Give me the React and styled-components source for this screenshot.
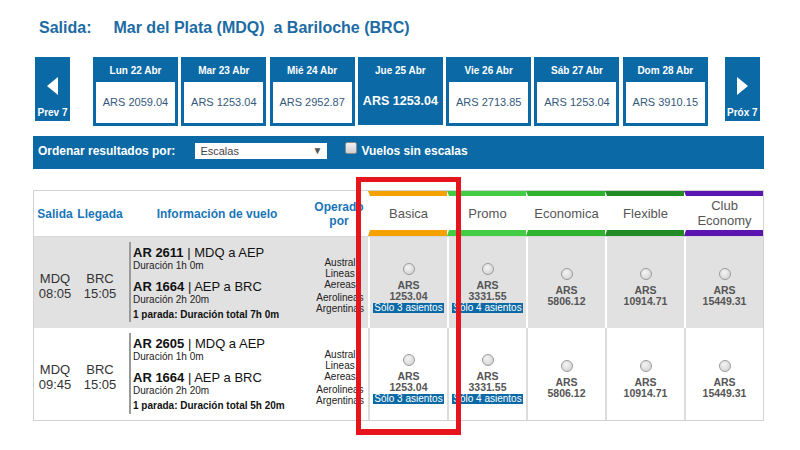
import React from "react";
import styled, { createGlobalStyle } from "styled-components";

const BLUE = "#0b6aa6";

const GlobalStyle = createGlobalStyle`
  body {
    margin: 0;
    background: #fff;
    font-family: "Liberation Sans", Arial, sans-serif;
  }
`;

const dates = [
  { label: "Lun 22 Abr", price: "ARS 2059.04" },
  { label: "Mar 23 Abr", price: "ARS 1253.04" },
  { label: "Mié 24 Abr", price: "ARS 2952.87" },
  { label: "Jue 25 Abr", price: "ARS 1253.04", selected: true },
  { label: "Vie 26 Abr", price: "ARS 2713.85" },
  { label: "Sáb 27 Abr", price: "ARS 1253.04" },
  { label: "Dom 28 Abr", price: "ARS 3910.15" },
];

const fares = [
  { name: "Basica", color: "#f5a100" },
  { name: "Promo", color: "#45cc45" },
  { name: "Economica", color: "#2db32d" },
  { name: "Flexible", color: "#238b23" },
  { name: "Club Economy", color: "#5b14b0" },
];

const flights = [
  {
    from: "MDQ",
    dep: "08:05",
    to: "BRC",
    arr: "15:05",
    legs: [
      { code: "AR 2611", route: "MDQ a AEP", dur: "Duración 1h 0m" },
      { code: "AR 1664", route: "AEP a BRC", dur: "Duración 2h 20m" },
    ],
    total: "1 parada: Duración total 7h 0m",
    shaded: true,
    prices: [
      { amount: "1253.04", seats: "Sólo 3 asientos" },
      { amount: "3331.55", seats: "Sólo 4 asientos" },
      { amount: "5806.12" },
      { amount: "10914.71" },
      { amount: "15449.31" },
    ],
  },
  {
    from: "MDQ",
    dep: "09:45",
    to: "BRC",
    arr: "15:05",
    legs: [
      { code: "AR 2605", route: "MDQ a AEP", dur: "Duración 1h 0m" },
      { code: "AR 1664", route: "AEP a BRC", dur: "Duración 2h 20m" },
    ],
    total: "1 parada: Duración total 5h 20m",
    prices: [
      { amount: "1253.04", seats: "Sólo 3 asientos" },
      { amount: "3331.55", seats: "Sólo 4 asientos" },
      { amount: "5806.12" },
      { amount: "10914.71" },
      { amount: "15449.31" },
    ],
  },
];

const App = () => {
  return (
    <Page>
      <GlobalStyle />
      <Title>
        <span>Salida:</span>
        <Route>Mar del Plata (MDQ)&nbsp; a Bariloche (BRC)</Route>
      </Title>

      <DateStrip>
        <NavButton>
          <Arrow $dir="left" />
          <NavLabel>Prev 7</NavLabel>
        </NavButton>
        <Tabs>
          {dates.map((d) =>
            d.selected ? (
              <SelectedTab key={d.label}>
                <TabLabel>{d.label}</TabLabel>
                <SelectedPrice>{d.price}</SelectedPrice>
              </SelectedTab>
            ) : (
              <Tab key={d.label}>
                <TabLabel>{d.label}</TabLabel>
                <TabPrice>{d.price}</TabPrice>
              </Tab>
            )
          )}
        </Tabs>
        <NavButton $next>
          <Arrow $dir="right" />
          <NavLabel>Próx 7</NavLabel>
        </NavButton>
      </DateStrip>

      <SortBar>
        <SortLabel>Ordenar resultados por:</SortLabel>
        <Select>
          <span>Escalas</span>
          <Caret>▼</Caret>
        </Select>
        <Check />
        <SortLabel>Vuelos sin escalas</SortLabel>
      </SortBar>

      <Table>
        <HeaderRow>
          <HeadCell>Salida</HeadCell>
          <HeadCell>Llegada</HeadCell>
          <HeadCell>Información de vuelo</HeadCell>
          <HeadCell>
            Operado
            <br />
            por
          </HeadCell>
          {fares.map((f) => (
            <FareHead key={f.name} $color={f.color}>
              <FareName>{f.name}</FareName>
            </FareHead>
          ))}
        </HeaderRow>

        {flights.map((fl, i) => (
          <Row key={i} $shaded={fl.shaded}>
            <PlaceCell>
              {fl.from}
              <br />
              {fl.dep}
            </PlaceCell>
            <PlaceCell>
              {fl.to}
              <br />
              {fl.arr}
            </PlaceCell>
            <InfoCell>
              <InfoBlock>
                {fl.legs.map((l) => (
                  <Leg key={l.code}>
                    <LegTitle>
                      <b>{l.code}</b> | {l.route}
                    </LegTitle>
                    <LegDur>{l.dur}</LegDur>
                  </Leg>
                ))}
                <Total>{fl.total}</Total>
              </InfoBlock>
            </InfoCell>
            <OperatorCell>
              <Operator>Austral Lineas Aereas</Operator>
              <Operator>Aerolineas Argentinas</Operator>
            </OperatorCell>
            {fl.prices.map((p, j) => (
              <FareCell key={j} $shaded={fl.shaded}>
                <Radio />
                <Currency>ARS</Currency>
                <Amount>{p.amount}</Amount>
                {p.seats && <Seats>{p.seats}</Seats>}
              </FareCell>
            ))}
          </Row>
        ))}
      </Table>

      <Highlight />
    </Page>
  );
};

const Page = styled.div`
  position: relative;
  width: 800px;
  height: 450px;
  padding-top: 18px;
  box-sizing: border-box;
`;

const Title = styled.div`
  margin-left: 39px;
  font-size: 16px;
  font-weight: bold;
  line-height: 19px;
  color: #1d6ba3;
`;

const Route = styled.span`
  margin-left: 22px;
`;

const DateStrip = styled.div`
  display: flex;
  align-items: flex-start;
  margin: 20px 0 0 35px;
`;

const NavButton = styled.div`
  width: 35px;
  height: 64px;
  background: ${BLUE};
  display: flex;
  flex-direction: column;
  align-items: center;
  margin-left: ${(p) => (p.$next ? "17px" : "0")};
  box-sizing: border-box;
  padding-top: 20px;
`;

const Arrow = styled.div`
  width: 0;
  height: 0;
  border-top: 9px solid transparent;
  border-bottom: 9px solid transparent;
  ${(p) =>
    p.$dir === "left"
      ? "border-right: 11px solid #fff;"
      : "border-left: 11px solid #fff;"}
`;

const NavLabel = styled.div`
  margin-top: 12px;
  font-size: 10px;
  font-weight: bold;
  color: #fff;
  white-space: nowrap;
`;

const Tabs = styled.div`
  display: flex;
  gap: 3.3px;
  margin-left: 23px;
`;

const Tab = styled.div`
  width: 85px;
  height: 69px;
  box-sizing: border-box;
  background: ${BLUE};
  padding: 0 3px 3px;
  display: flex;
  flex-direction: column;
`;

const SelectedTab = styled(Tab)`
  height: 68px;
`;

const TabLabel = styled.div`
  height: 25px;
  line-height: 27px;
  text-align: center;
  font-size: 10px;
  font-weight: bold;
  color: #fff;
`;

const TabPrice = styled.div`
  height: 41px;
  line-height: 41px;
  background: #fff;
  text-align: center;
  font-size: 11px;
  color: #34587c;
`;

const SelectedPrice = styled.div`
  line-height: 38px;
  text-align: center;
  font-size: 12.5px;
  font-weight: bold;
  color: #fff;
`;

const SortBar = styled.div`
  display: flex;
  align-items: center;
  width: 731px;
  height: 33px;
  box-sizing: border-box;
  margin: 10px 0 0 33px;
  padding: 0 0 4px 5px;
  background: ${BLUE};
`;

const SortLabel = styled.span`
  font-size: 12px;
  font-weight: bold;
  color: #fff;
`;

const Select = styled.div`
  display: flex;
  align-items: center;
  justify-content: space-between;
  width: 132px;
  height: 16px;
  box-sizing: border-box;
  margin: 0 18px 0 20px;
  padding: 0 5px 0 5px;
  background: #fff;
  font-size: 11px;
  color: #444;
`;

const Caret = styled.span`
  font-size: 10px;
  line-height: 10px;
  color: #555;
`;

const Check = styled.div`
  width: 12px;
  height: 12px;
  box-sizing: border-box;
  margin: 0 4px 6px 0;
  border: 1px solid #8a8a8a;
  border-radius: 2px;
  background: linear-gradient(#f2f2f2, #cfcfcf);
`;

const COLS = "42px 48px 186px 58px repeat(5, 79px)";

const Table = styled.div`
  margin: 21px 0 0 33px;
  width: 731px;
  border: 1px solid #d2d2d2;
  box-sizing: border-box;
`;

const HeaderRow = styled.div`
  display: grid;
  grid-template-columns: ${COLS};
  height: 45px;
  border-bottom: 1px solid #d8d8d8;
`;

const HeadCell = styled.div`
  display: flex;
  align-items: center;
  justify-content: center;
  text-align: center;
  font-size: 12px;
  font-weight: bold;
  line-height: 14px;
  color: #1a75b8;
  white-space: nowrap;
`;

const FareHead = styled.div`
  display: flex;
  border-left: 2px solid #fff;
  border-top: 5px solid ${(p) => p.$color};
  border-bottom: 6px solid ${(p) => p.$color};
`;

const FareName = styled.div`
  flex: 1;
  display: flex;
  align-items: center;
  justify-content: center;
  text-align: center;
  padding: 0 4px;
  font-size: 13px;
  line-height: 15px;
  color: #555;
  word-spacing: 60px;
`;

const Row = styled.div`
  display: grid;
  grid-template-columns: ${COLS};
  height: 91px;
  background: ${(p) => (p.$shaded ? "#e1e1e1" : "#fff")};
  & + & {
    height: 92px;
  }
`;

const PlaceCell = styled.div`
  display: flex;
  align-items: center;
  justify-content: center;
  text-align: center;
  padding-top: 6px;
  font-size: 13px;
  line-height: 15px;
  color: #333;
`;

const InfoCell = styled.div`
  padding: 5px 0 6px 5px;
  display: flex;
`;

const InfoBlock = styled.div`
  flex: 1;
  border-left: 2px solid #9a9a9a;
  padding: 3px 0 0 2px;
  color: #111;
`;

const Leg = styled.div`
  margin-bottom: 7px;
`;

const LegTitle = styled.div`
  font-size: 13px;
  line-height: 15px;
  color: #111;
`;

const LegDur = styled.div`
  font-size: 10px;
  line-height: 12px;
  color: #222;
`;

const Total = styled.div`
  font-size: 10px;
  font-weight: bold;
  line-height: 12px;
  margin-top: -4px;
`;

const OperatorCell = styled.div`
  display: flex;
  flex-direction: column;
  align-items: center;
  justify-content: center;
  gap: 2px;
  padding: 6px 2px 0 4px;
`;

const Operator = styled.div`
  font-size: 10px;
  line-height: 11px;
  text-align: center;
  color: #222;
`;

const FareCell = styled.div`
  display: flex;
  flex-direction: column;
  align-items: center;
  justify-content: center;
  padding-top: 10px;
  border-left: 2px solid ${(p) => (p.$shaded ? "#fff" : "#dcdcdc")};
  white-space: nowrap;
`;

const Radio = styled.div`
  width: 12px;
  height: 12px;
  box-sizing: border-box;
  border-radius: 50%;
  border: 1px solid #9b9b9b;
  background: radial-gradient(circle at 40% 35%, #f4f4f4, #cdcdcd);
  margin-bottom: 4px;
`;

const Currency = styled.div`
  font-size: 10.5px;
  font-weight: bold;
  line-height: 12px;
  color: #555;
`;

const Amount = styled.div`
  font-size: 10.5px;
  font-weight: bold;
  line-height: 11px;
  color: #555;
`;

const Seats = styled.div`
  margin-top: 1px;
  background: ${BLUE};
  color: #fff;
  font-size: 10px;
  line-height: 10px;
  padding: 0 1px;
`;

const Highlight = styled.div`
  position: absolute;
  left: 356px;
  top: 177px;
  width: 105px;
  height: 258px;
  box-sizing: border-box;
  border: 5px solid #e6141d;
  border-bottom-width: 6px;
  pointer-events: none;
`;

export default App;
